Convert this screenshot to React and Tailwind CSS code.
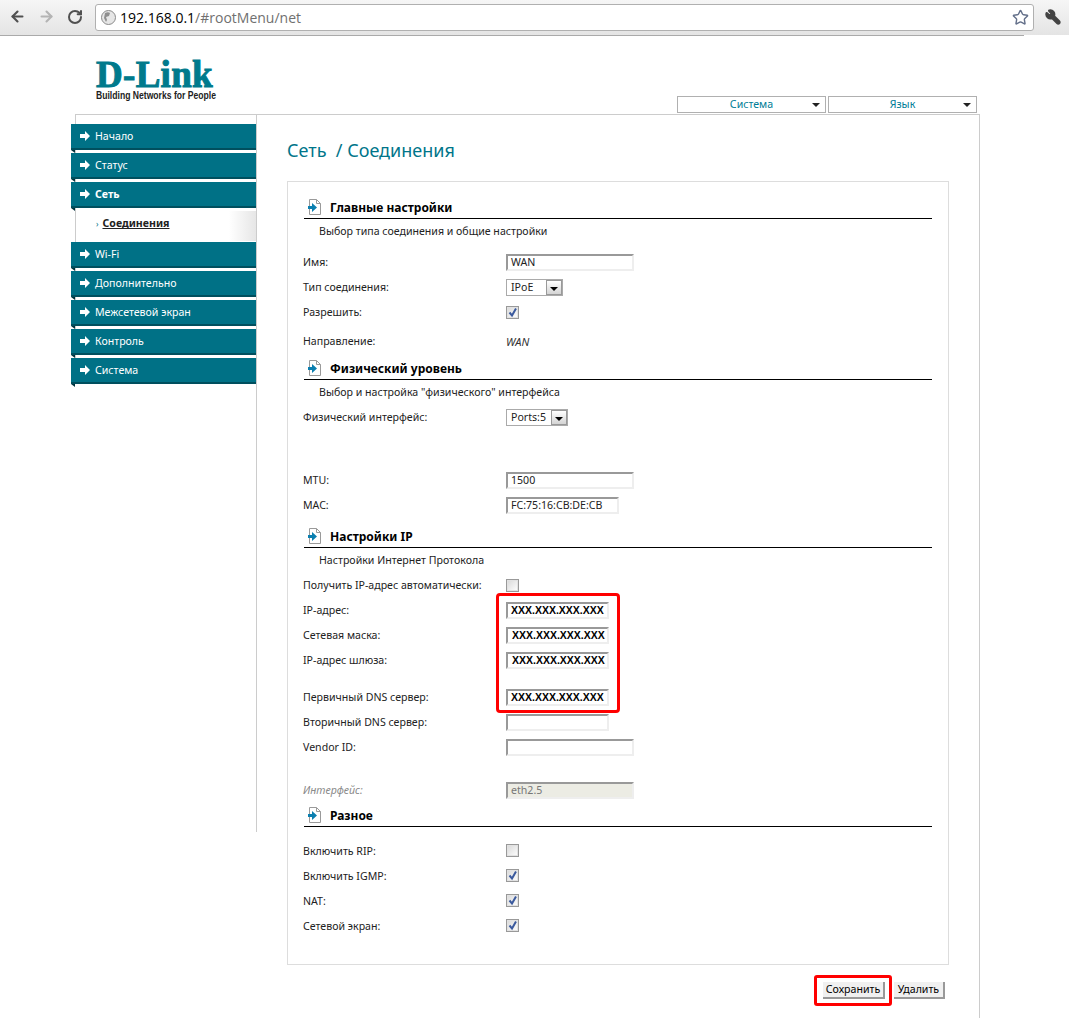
import { ArrowLeft, ArrowRight, RotateCw, Star, Wrench } from "lucide-react";

const MENU_TOP = ["Начало", "Статус"];
const MENU_BOTTOM = ["Wi-Fi", "Дополнительно", "Межсетевой экран", "Контроль", "Система"];

function BlockArrow() {
  return (
    <svg width="10" height="10" viewBox="0 0 10 10" className="shrink-0">
      <path d="M0 3h5V0l5 5-5 5V7H0z" fill="#fff" />
    </svg>
  );
}

function MenuItem({ label, bold }) {
  return (
    <div className="relative -ml-[5px] mb-[3px] flex h-[26px] items-center gap-[5px] border-b-2 border-[#004f5e] bg-[#007186] pl-[9px] text-[10.600px] text-white">
      <BlockArrow />
      <span className={bold ? "pt-px font-bold" : "pt-px"}>{label}</span>
      <span className="absolute left-0 top-[26px] h-[3px] w-[4px] bg-[#00333d] [clip-path:polygon(0_0,100%_0,100%_100%)]" />
    </div>
  );
}

function SectionHead({ title, className = "" }) {
  return (
    <div className={`ml-px flex h-[22px] items-start border-b border-black pl-1 ${className}`}>
      <svg width="13" height="16" viewBox="0 0 13 16" className="mt-[2px] shrink-0">
        <path d="M1.500.5h7l4 4v11h-11z" fill="#fff" stroke="#9a9a9a" />
        <path d="M8.500.5v4h4" fill="none" stroke="#9a9a9a" />
        <path d="M0 7h4V4l5 4.500-5 4.500v-3H0z" fill="#0b7fb0" />
      </svg>
      <span className="ml-[9px] text-[12px] font-bold leading-[22px] text-black">{title}</span>
    </div>
  );
}

function SubTitle({ children }) {
  return <div className="h-[24px] pl-4 text-[10.600px] leading-[24px] text-[#222]">{children}</div>;
}

function Row({ label, italic, className = "", children }) {
  return (
    <div className={`flex h-[25px] items-center ${className}`}>
      <div className={`w-[203px] text-[10.600px] ${italic ? "italic text-[#8a8a8a]" : "text-[#222]"}`}>{label}</div>
      {children}
    </div>
  );
}

function TextBox({ value, width, disabled }) {
  return (
    <div
      className={`flex h-[17px] items-center overflow-hidden border-2 border-t-[#999] border-r-[#eee] border-b-[#eee] border-l-[#999] pl-[3px] text-[10.600px] text-[#222] ${width} ${
        disabled ? "bg-[#ecece4] text-[#777]" : "bg-white"
      }`}
    >
      {value}
    </div>
  );
}

function MaskedBox({ shifted }) {
  return (
    <div
      className={`flex h-[17px] w-[103px] items-center overflow-hidden border-2 border-t-[#999] border-r-[#eee] border-b-[#eee] border-l-[#999] bg-white font-['Liberation_Sans',sans-serif] text-[10.500px] font-bold text-black ${
        shifted ? "pl-[4px]" : "pl-[3px]"
      }`}
    >
      XXX.XXX.XXX.XXX
    </div>
  );
}

function SelectBox({ value, width }) {
  return (
    <div className={`flex h-[17px] items-center justify-between border border-[#aaa] pl-1 text-[10.600px] text-[#222] ${width}`}>
      <span>{value}</span>
      <span className="flex h-[15px] w-[16px] items-center justify-center border border-[#999] bg-gradient-to-b from-white to-[#d4d4d4]">
        <span className="mt-[2px] h-0 w-0 border-x-[4px] border-t-[4px] border-x-transparent border-t-black" />
      </span>
    </div>
  );
}

function CheckBox({ checked, className = "" }) {
  return (
    <div className={`flex h-[13px] w-[13px] items-center justify-center border border-[#999] bg-gradient-to-br from-[#d8d8d8] to-white shadow-[inset_0_0_0_1px_#e2e2e2] ${className}`}>
      {checked && (
        <svg width="11" height="11" viewBox="0 0 11 11">
          <path d="M2.500 5.500 5 8.500 9 1.500" fill="none" stroke="#3b5a9e" strokeWidth="2" />
        </svg>
      )}
    </div>
  );
}

function TopDropdown({ label }) {
  return (
    <div className="relative flex h-[17px] w-[149px] items-center justify-center border border-[#b0b0b0] text-[10.600px] text-[#007d96]">
      {label}
      <span className="absolute right-[5px] top-[6px] h-0 w-0 border-x-[4px] border-t-[4px] border-x-transparent border-t-[#222]" />
    </div>
  );
}

function ActionButton({ label, width }) {
  return (
    <div className={`flex h-[17px] items-center justify-center border-r-2 border-b-2 border-r-[#999] border-b-[#999] bg-[#f0f0f0] text-[10.600px] text-black ${width}`}>
      {label}
    </div>
  );
}

export default function App() {
  return (
    <div className="h-[1024px] w-[1069px] overflow-hidden bg-white font-['Noto_Sans',sans-serif]">
      {/* Browser toolbar */}
      <div className="flex h-[35px] items-start bg-gradient-to-b from-[#f6f6f6] to-[#e4e4e4]">
        <div className="flex h-[35px] items-center gap-3 pl-[9px] pb-[2px]">
          <ArrowLeft size={17} strokeWidth={3} className="text-[#505050]" />
          <ArrowRight size={17} strokeWidth={3} className="text-[#b4b4b4]" />
          <RotateCw size={16} strokeWidth={3} className="text-[#505050]" />
        </div>
        <div className="ml-3 mt-1 flex h-[27px] w-[939px] items-center rounded-[3px] border border-[#b0b0b0] bg-white pl-[5px] pr-[4px]">
          <svg width="15" height="15" viewBox="0 0 15 15" className="shrink-0">
            <circle cx="7.500" cy="7.500" r="7" fill="#e6e6e6" stroke="#8a8a8a" />
            <path d="M4 3c2-1 4-1 5 0l-1 3-3 1 1 3-1 2-2-4z" fill="#8f8f8f" />
          </svg>
          <span className="ml-[4px] font-['Open_Sans',sans-serif] text-[14px] text-black">
            192.168.0.1<span className="text-[#707070]">/#rootMenu/net</span>
          </span>
          <Star size={17} strokeWidth={2} className="ml-auto text-[#64708a]" />
        </div>
        <Wrench size={16} strokeWidth={3} className="ml-[11px] mt-[9px] -scale-x-100 fill-[#444] text-[#444]" />
      </div>
      <div className="h-px w-[1024px] bg-[#aaa]" />

      {/* Logo and top menus */}
      <div className="flex h-[78px]">
        <div className="ml-[96px] mt-[23px]">
          <div className="font-['Liberation_Serif',serif] text-[37px] font-bold leading-[32px] tracking-[0.3px] text-[#007a8c] [-webkit-text-stroke:1px_#007a8c]">D-Link</div>
          <div className="origin-left scale-x-[.86] whitespace-nowrap font-['Liberation_Sans',sans-serif] text-[10px] font-bold leading-[10px] text-[#222]">Building Networks for People</div>
        </div>
        <div className="ml-auto mr-[92px] flex gap-[2px] self-end pb-[1px]">
          <TopDropdown label="Система" />
          <TopDropdown label="Язык" />
        </div>
      </div>

      {/* Frame */}
      <div className="ml-[75px] flex h-[904px] w-[905px] border-t border-r border-[#ccc]">
        <div className="h-[717px] w-[182px] shrink-0 border-r border-[#ccc]">
          <div className="border-l border-[#ccc] pt-[9px]">
            {MENU_TOP.map((m) => (
              <MenuItem key={m} label={m} />
            ))}
            <MenuItem label="Сеть" bold />
            <div className="mb-px flex h-[30px] items-center gap-1 bg-gradient-to-r from-white from-[85%] to-[#e6e6e6] pb-[4px] pl-[20px] text-[10.600px] font-bold text-[#222]">
              <span className="text-[8px] font-normal text-[#007186]">›</span>
              <span className="underline">Соединения</span>
            </div>
            {MENU_BOTTOM.map((m) => (
              <MenuItem key={m} label={m} />
            ))}
          </div>
        </div>

        <div className="flex-1 pl-[30px]">
          <h1 className="h-[66px] pt-[21px] text-[18px] leading-[28px] text-[#00758a]">Сеть&nbsp; / Соединения</h1>

          <div className="relative h-[784px] w-[662px] border border-[#ddd] pl-[15px] pr-4 pt-[15px]">
            <SectionHead title="Главные настройки" />
            <SubTitle>Выбор типа соединения и общие настройки</SubTitle>
            <Row label="Имя:" className="mt-[7px]">
              <TextBox value="WAN" width="w-[128px]" />
            </Row>
            <Row label="Тип соединения:">
              <SelectBox value="IPoE" width="w-[57px]" />
            </Row>
            <Row label="Разрешить:">
              <CheckBox checked />
            </Row>
            <Row label="Направление:" className="mt-1">
              <span className="pt-px text-[11px] italic text-[#333]">WAN</span>
            </Row>

            <SectionHead title="Физический уровень" className="mt-1" />
            <SubTitle>Выбор и настройка "физического" интерфейса</SubTitle>
            <Row label="Физический интерфейс:" className="mt-px">
              <SelectBox value="Ports:5" width="w-[62px]" />
            </Row>
            <Row label="MTU:" className="mt-[38px]">
              <TextBox value="1500" width="w-[128px]" />
            </Row>
            <Row label="MAC:">
              <TextBox value="FC:75:16:CB:DE:CB" width="w-[113px]" />
            </Row>

            <SectionHead title="Настройки IP" className="mt-2" />
            <SubTitle>Настройки Интернет Протокола</SubTitle>
            <Row label="Получить IP-адрес автоматически:" className="mt-px">
              <CheckBox />
            </Row>
            <Row label="IP-адрес:">
              <MaskedBox />
            </Row>
            <Row label="Сетевая маска:">
              <MaskedBox shifted />
            </Row>
            <Row label="IP-адрес шлюза:">
              <MaskedBox shifted />
            </Row>
            <Row label="Первичный DNS сервер:" className="mt-3">
              <MaskedBox />
            </Row>
            <Row label="Вторичный DNS сервер:">
              <TextBox value="" width="w-[103px]" />
            </Row>
            <Row label="Vendor ID:">
              <TextBox value="" width="w-[128px]" />
            </Row>
            <Row label="Интерфейс:" italic className="mt-[18px]">
              <TextBox value="eth2.5" width="w-[128px]" disabled />
            </Row>

            <SectionHead title="Разное" className="mt-[2px]" />
            <Row label="Включить RIP:" className="mt-3">
              <CheckBox className="-mt-[2px]" />
            </Row>
            <Row label="Включить IGMP:">
              <CheckBox checked className="-mt-[2px]" />
            </Row>
            <Row label="NAT:">
              <CheckBox checked className="-mt-[2px]" />
            </Row>
            <Row label="Сетевой экран:">
              <CheckBox checked className="-mt-[2px]" />
            </Row>

            {/* Highlight drawn over the address fields */}
            <div className="absolute left-[208px] top-[411px] h-[120px] w-[124px] rounded-[4px] border-[3px] border-[#f00]" />
          </div>

          <div className="mr-[34px] mt-[17px] flex justify-end gap-[9px]">
            <div className="relative">
              <ActionButton label="Сохранить" width="w-[62px]" />
              <div className="absolute -inset-y-[7px] -left-[9px] -right-[7px] rounded-[3px] border-[3px] border-[#f00]" />
            </div>
            <ActionButton label="Удалить" width="w-[51px]" />
          </div>
        </div>
      </div>
    </div>
  );
}
